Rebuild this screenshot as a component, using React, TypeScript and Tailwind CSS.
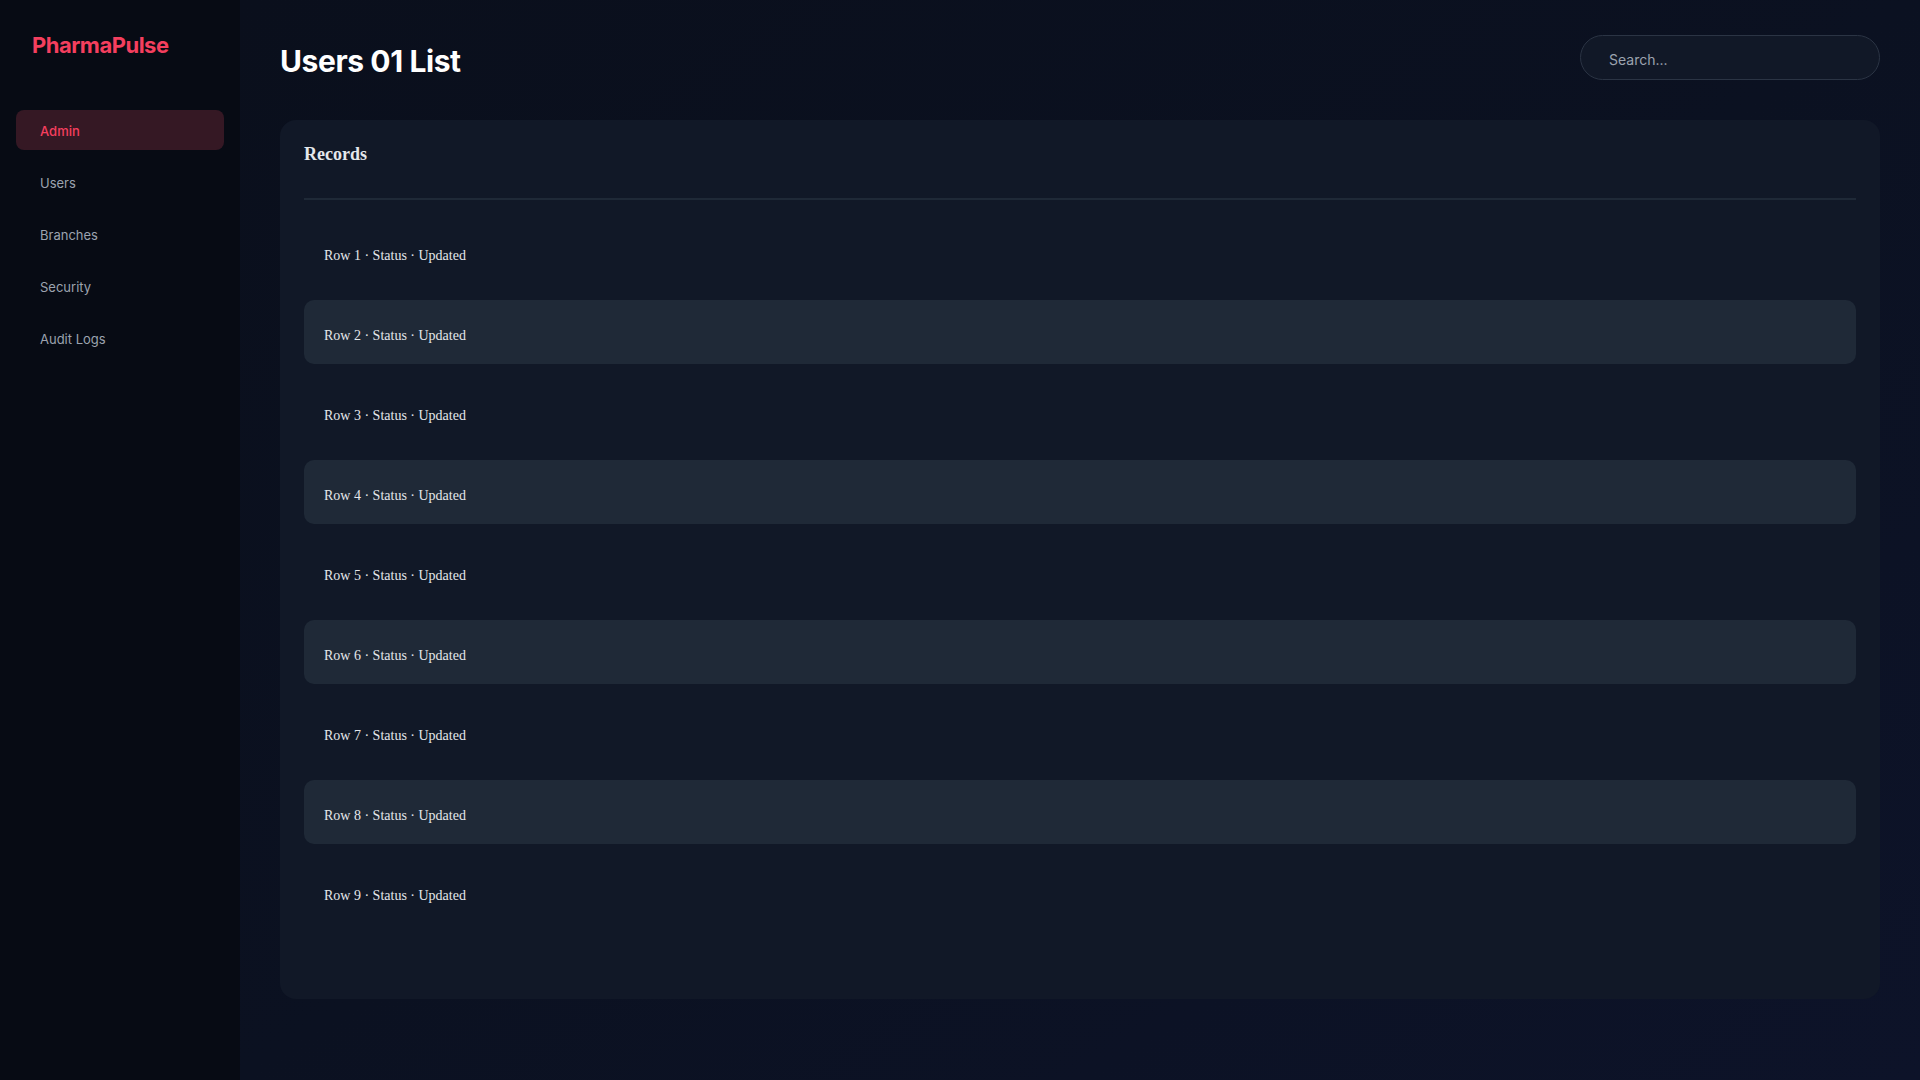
import React from 'react'

const navItems = ['Admin', 'Users', 'Branches', 'Security', 'Audit Logs']

const rows = Array.from({ length: 9 }, (_, i) => i + 1)

export default function App() {
  return (
    <div className="flex min-h-screen w-full bg-[#0b1120] font-['Inter','Liberation_Sans',sans-serif]">
      <aside className="w-[240px] shrink-0 bg-[#070b14] px-4 pt-[31px]">
        <div className="px-4 text-[22px] leading-[28px] font-bold tracking-[-0.5px] text-[#f43f5e]">PharmaPulse</div>
        <nav className="mt-[51px] flex flex-col gap-3">
          {navItems.map(item => (
            <div
              key={item}
              className={`flex h-10 items-center rounded-lg px-6 pt-[4px] text-[13px] ${
                item === 'Admin'
                  ? 'bg-[#351824] font-medium text-[#f43f5e]'
                  : 'text-[#9ca3af]'
              }`}
            >
              {item}
            </div>
          ))}
        </nav>
      </aside>

      <main className="flex-1 bg-gradient-to-br from-[#0a0f1c] via-[#0b1121] to-[#0d1329] px-10 pt-[35px] pb-10">
        <div className="mb-10 flex items-start justify-between">
          <h1 className="mt-[8px] text-[30px] leading-[36px] font-bold tracking-[-0.4px] text-white">Users 01 List</h1>
          <div className="flex h-[45px] w-[300px] items-center rounded-full border border-[#2b3444] bg-[#111827] pt-[3px] pl-7 text-[14px] text-[#9ca3af]">
            Search...
          </div>
        </div>

        <section className="rounded-2xl bg-[#111827] px-6 pt-5 pb-[75px] font-['Liberation_Serif','Times_New_Roman',serif]">
          <h2 className="border-b-2 border-[#1f2937] pb-[30px] text-[18px] leading-[28px] font-bold text-[#e5e7eb]">
            Records
          </h2>
          <div className="mt-5 flex flex-col gap-4">
            {rows.map(n => (
              <div
                key={n}
                className={`flex h-16 items-center rounded-[10px] px-5 pt-[7px] text-[14px] text-[#e5e7eb] ${
                  n % 2 === 0 ? 'bg-[#1f2937]' : ''
                }`}
              >
                Row {n} · Status · Updated
              </div>
            ))}
          </div>
        </section>
      </main>
    </div>
  )
}
